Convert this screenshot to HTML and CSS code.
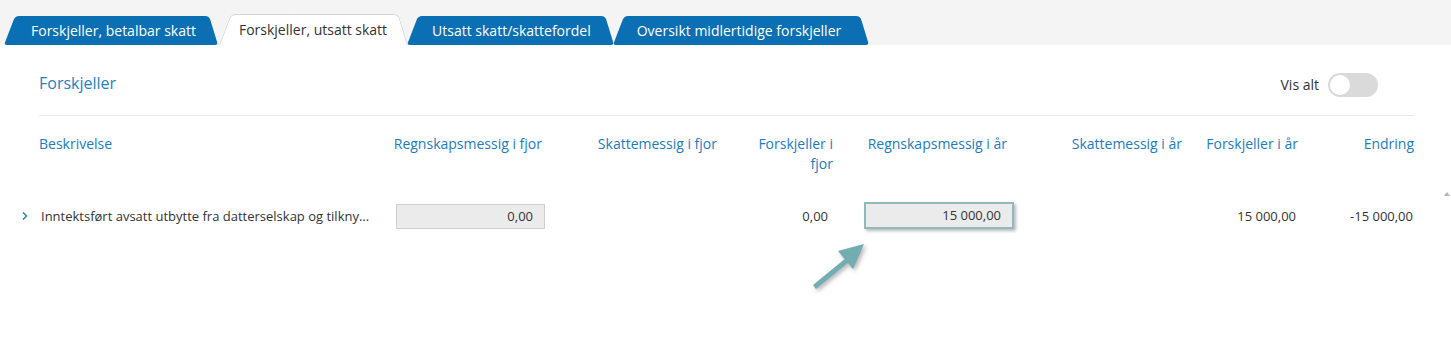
FILE: index.html
```html
<!DOCTYPE html>
<html lang="no">
<head>
<meta charset="utf-8">
<title>Forskjeller</title>
<link rel="stylesheet" href="styles.css">
</head>
<body>
<div class="topbar">
  <nav class="tabs">
    <div class="tab"><span>Forskjeller, betalbar skatt</span></div>
    <div class="tab active"><span>Forskjeller, utsatt skatt</span></div>
    <div class="tab t3"><span>Utsatt skatt/skattefordel</span></div>
    <div class="tab t4"><span>Oversikt midlertidige forskjeller</span></div>
  </nav>
</div>
<main class="panel">
  <div class="panel-head">
    <h2 class="title">Forskjeller</h2>
    <label class="toggle-wrap">
      <span class="toggle-label">Vis alt</span>
      <span class="toggle"><span class="knob"></span></span>
    </label>
  </div>
  <div class="table">
    <div class="row head">
      <div class="cell exp"></div>
      <div class="cell desc">Beskrivelse</div>
      <div class="cell num c1">Regnskapsmessig i fjor</div>
      <div class="cell num c2">Skattemessig i fjor</div>
      <div class="cell num c3 wrap">Forskjeller i fjor</div>
      <div class="cell num c4">Regnskapsmessig i år</div>
      <div class="cell num c5">Skattemessig i år</div>
      <div class="cell num c6">Forskjeller i år</div>
      <div class="cell num c7">Endring</div>
    </div>
    <div class="row data">
      <div class="cell exp">
        <svg class="chev" width="8" height="10" viewBox="0 0 8 10"><path d="M2 1.5 L5.5 5 L2 8.5" fill="none" stroke="#1b7cc0" stroke-width="1.4"/></svg>
      </div>
      <div class="cell desc">Inntektsført avsatt utbytte fra datterselskap og tilkny...</div>
      <div class="cell num c1"><div class="input">0,00</div></div>
      <div class="cell num c2"></div>
      <div class="cell num c3">0,00</div>
      <div class="cell num c4"><div class="input focused">15 000,00</div></div>
      <div class="cell num c5"></div>
      <div class="cell num c6">15 000,00</div>
      <div class="cell num c7">-15 000,00</div>
    </div>
  </div>
</main>
<svg class="arrow" width="80" height="60" viewBox="0 0 80 60">
  <g fill="#72adb1" stroke="none">
    <path d="M8 45 L41 18 L44 22 L11 49 Z"/>
    <path d="M59 4 L33 11 L48 29 Z"/>
  </g>
</svg>
<div class="scroll-up"></div>
</body>
</html>
```
FILE: styles.css
```css
* { box-sizing: border-box; }
html, body { margin: 0; padding: 0; }
body {
  font-family: "Open Sans", "Liberation Sans", sans-serif;
  font-size: 14px;
  color: #333;
  background: #fff;
  width: 1451px;
  height: 354px;
  overflow: hidden;
  position: relative;
}
.topbar {
  background: #f4f4f4;
  height: 45px;
  display: flex;
  align-items: flex-end;
  padding-left: 4px;
}
.tabs { display: flex; align-items: flex-end; }
.tab {
  position: relative;
  height: 29px;
  display: flex;
  align-items: center;
  color: #fff;
  padding: 0 22px 0 27px;
  margin-right: -1px;
  z-index: 1;
}
.tab span { position: relative; z-index: 2; white-space: nowrap; line-height: 20px; }
.tab::before, .tab::after {
  content: "";
  position: absolute;
  top: 0; bottom: 0;
  width: 55%;
  background: #0b6fb4;
  z-index: 1;
}
.tab::before {
  left: 0;
  transform-origin: bottom left;
  transform: skewX(-21deg);
  border-radius: 4px 0 0 3px;
}
.tab::after {
  right: 0;
  transform-origin: bottom right;
  transform: skewX(17deg);
  border-radius: 0 4px 3px 0;
}
.tab.active {
  height: 31px;
  color: #333;
  z-index: 3;
  padding: 0 21px 0 20px;
  margin-left: 2px;
}
.tab.t3 { padding-left: 25px; padding-right: 23px; }
.tab.t4 { padding-left: 24px; padding-right: 28px; }
.tab.active::before, .tab.active::after {
  background: #fff;
  border-top: 1px solid #d4d4d4;
}
.tab.active::before { border-left: 1px solid #d4d4d4; border-radius: 5px 0 0 0; }
.tab.active::after { border-right: 1px solid #d4d4d4; border-radius: 0 5px 0 0; }

.panel { padding: 0 37px 0 39px; }
.panel-head {
  height: 71px;
  padding-top: 5px;
  display: flex;
  align-items: center;
  justify-content: space-between;
  border-bottom: 1px solid #e8e8e8;
}
.title {
  margin: 0;
  font-weight: 400;
  font-size: 16px;
  color: #2680c2;
}
.toggle-wrap { display: flex; align-items: center; gap: 9px; margin-right: 36px; margin-top: 4px; }
.toggle-label { font-size: 14px; color: #333; }
.toggle {
  width: 50px; height: 24px;
  border-radius: 12px;
  background: #dadada;
  display: flex;
  align-items: center;
  padding-left: 2px;
}
.knob { width: 20px; height: 20px; border-radius: 50%; background: #fff; }

.table { margin-left: -23px; }
.row {
  display: grid;
  grid-template-columns: 23px 341px 165px 172px 116px 181px 168px 116px 116px;
}
.row.head {
  padding-top: 18px;
  color: #1b7cc0;
  line-height: 20px;
  height: 80px;
}
.cell.num { text-align: right; }
.head .c1 { padding-right: 3px; }
.head .c3 { padding-left: 30px; }
.head .c4 { padding-right: 7px; }
.row.data {
  align-items: center;
  height: 40px;
  font-size: 13px;
}
.data .desc { padding-left: 2px; white-space: nowrap; overflow: hidden; }
.data .exp { display: flex; align-items: center; padding-left: 5px; }
.chev { display: block; }
.data .c3 { padding-right: 5px; }
.data .c6 { padding-right: 2px; }
.data .c7 { padding-right: 1px; }
.input {
  margin-left: auto;
  width: 149px;
  height: 25px;
  background: #ebebeb;
  border: 1px solid #cfcfcf;
  line-height: 23px;
  padding-right: 11px;
  text-align: right;
}
.input.focused {
  width: 150px;
  height: 27px;
  border: 2px solid #8fb9bc;
  line-height: 23px;
  box-shadow: 2px 2px 3px rgba(0,0,0,0.28);
  margin-top: -1px;
}
.arrow {
  position: absolute;
  left: 805px;
  top: 240px;
  filter: drop-shadow(2px 2px 2px rgba(0,0,0,0.3));
}
.scroll-up {
  position: absolute;
  left: 1444px;
  top: 192px;
  width: 0; height: 0;
  border-left: 3.5px solid transparent;
  border-right: 3.5px solid transparent;
  border-bottom: 4px solid #b5b5b5;
}
```
